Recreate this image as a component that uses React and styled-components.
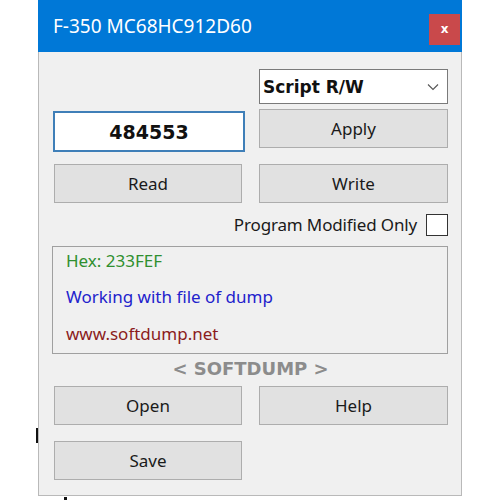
import React from "react";
import styled, { createGlobalStyle } from "styled-components";

const Global = createGlobalStyle`
  html, body { margin: 0; padding: 0; background: #ffffff; }
  body { font-family: "Noto Sans", "Open Sans", sans-serif; }
`;

const Page = styled.div`
  width: 500px;
  height: 500px;
  position: relative;
  overflow: hidden;
`;

const Window = styled.div`
  margin-left: 38px;
  width: 424px;
  height: 496px;
  box-sizing: border-box;
  background: #f0f0f0;
  border: 1px solid #b9b9b9;
  border-top: none;
  display: flex;
  flex-direction: column;
`;

const TitleBar = styled.div`
  height: 52px;
  margin: 0 -1px;
  background: #0078d7;
  display: flex;
  align-items: center;
  justify-content: space-between;
  padding: 0 2px 0 15px;
  box-sizing: border-box;
`;

const Title = styled.span`
  color: #ffffff;
  font-size: 19px;
  letter-spacing: 0;
  margin-top: -1px;
`;

const Close = styled.div`
  width: 31px;
  height: 31px;
  background: #c9494b;
  color: #ffffff;
  font-family: "DejaVu Sans", sans-serif;
  font-weight: bold;
  font-size: 12px;
  display: flex;
  align-items: center;
  justify-content: center;
  margin-top: 7px;
  padding-bottom: 2px;
  box-sizing: border-box;
`;

const Body = styled.div`
  padding: 0 13px 0 14px;
  display: flex;
  flex-direction: column;
`;

const Row = styled.div`
  display: grid;
  grid-template-columns: 192px 189px;
  column-gap: 14px;
  margin-top: ${(p) => p.$top}px;
  align-items: start;
`;

const Select = styled.div`
  grid-column: 2;
  height: 35px;
  box-sizing: border-box;
  border: 1px solid #7a7a7a;
  background: #ffffff;
  display: flex;
  align-items: center;
  justify-content: space-between;
  padding: 0 8px 0 3px;
  font-family: "DejaVu Sans", sans-serif;
  font-weight: bold;
  font-size: 17px;
  color: #111;
`;

const Input = styled.div`
  height: 41px;
  box-sizing: border-box;
  border: 2px solid #3f7fb8;
  background: #ffffff;
  display: flex;
  align-items: center;
  justify-content: center;
  font-family: "DejaVu Sans", sans-serif;
  font-weight: bold;
  font-size: 19px;
  color: #111;
  margin-top: 2px;
`;

const Button = styled.div`
  height: 39px;
  box-sizing: border-box;
  border: 1px solid #adadad;
  background: #e1e1e1;
  display: flex;
  align-items: center;
  justify-content: center;
  font-size: 17px;
  color: #1a1a1a;
  margin-left: ${(p) => (p.$left ? 1 : 0)}px;
  width: ${(p) => (p.$left ? 188 : 189)}px;
  padding-bottom: 1px;
`;

const CheckRow = styled.div`
  display: flex;
  justify-content: flex-end;
  align-items: center;
  gap: 9px;
  margin-top: 10px;
  font-size: 17px;
  letter-spacing: -0.15px;
  color: #1a1a1a;
`;

const Box = styled.div`
  width: 22px;
  height: 22px;
  box-sizing: border-box;
  border: 1px solid #333;
  background: #fff;
`;

const Panel = styled.div`
  margin-top: 10px;
  margin-left: -1px;
  width: 396px;
  height: 108px;
  box-sizing: border-box;
  border: 1px solid #a0a0a0;
  padding: 3px 0 0 13px;
  display: flex;
  flex-direction: column;
  font-size: 17px;
`;

const Line = styled.div`
  color: ${(p) => p.$color};
  height: ${(p) => p.$h}px;
  line-height: 22px;
`;

const Brand = styled.div`
  text-align: center;
  font-family: "DejaVu Sans", sans-serif;
  font-weight: bold;
  font-size: 18px;
  color: #8c8c8c;
  margin-top: 3px;
  height: 26px;
  line-height: 24px;
`;

const Marker = styled.div`
  position: absolute;
  background: #111;
  left: ${(p) => p.$x}px;
  top: ${(p) => p.$y}px;
  width: ${(p) => p.$w}px;
  height: ${(p) => p.$h}px;
`;

export default function App() {
  return (
    <Page>
      <Global />
      <Window>
        <TitleBar>
          <Title>F-350 MC68HC912D60</Title>
          <Close>x</Close>
        </TitleBar>
        <Body>
          <Row $top={17}>
            <Select>
              <span>Script R/W</span>
              <svg width="12" height="8" viewBox="0 0 12 8">
                <path d="M1 1.5 L6 6.5 L11 1.5" fill="none" stroke="#555" strokeWidth="1.1" />
              </svg>
            </Select>
          </Row>
          <Row $top={5}>
            <Input>484553</Input>
            <Button>Apply</Button>
          </Row>
          <Row $top={12}>
            <Button $left>Read</Button>
            <Button>Write</Button>
          </Row>
          <CheckRow>
            <span>Program Modified Only</span>
            <Box />
          </CheckRow>
          <Panel>
            <Line $color="#2f8f2f" $h={36}>Hex: 233FEF</Line>
            <Line $color="#2222cc" $h={38}>Working with file of dump</Line>
            <Line $color="#8b1c1c" $h={30}>www.softdump.net</Line>
          </Panel>
          <Brand>&lt; SOFTDUMP &gt;</Brand>
          <Row $top={3}>
            <Button $left>Open</Button>
            <Button>Help</Button>
          </Row>
          <Row $top={16}>
            <Button $left>Save</Button>
          </Row>
        </Body>
      </Window>
      <Marker $x={36} $y={428} $w={2} $h={15} />
      <Marker $x={64} $y={497} $w={3} $h={3} />
    </Page>
  );
}
